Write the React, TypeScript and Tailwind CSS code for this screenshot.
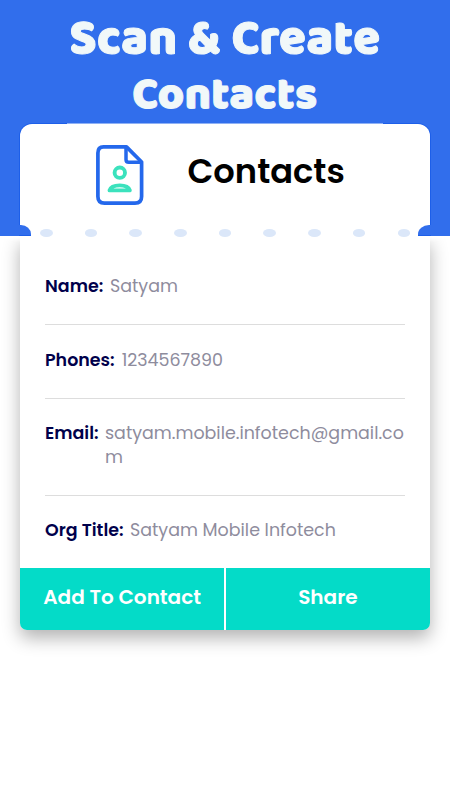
import React from "react";

const dots = [0, 1, 2, 3, 4, 5, 6, 7, 8];

function ContactFileIcon() {
  return (
    <svg width="48" height="60" viewBox="0 0 48 60" fill="none" className="block">
      <path
        d="M7.5 1.9H30.5L45.6 17V51.5Q45.6 58.1 39 58.1H8.5Q1.9 58.1 1.9 51.5V8Q1.9 1.9 7.5 1.9Z"
        stroke="#2468ec"
        strokeWidth="3.7"
        strokeLinejoin="round"
      />
      <path d="M30 2V14.5Q30 17.3 32.8 17.3H45.5" stroke="#2468ec" strokeWidth="3.5" strokeLinejoin="round" />
      <circle cx="23.8" cy="27.7" r="5.2" stroke="#3be2bd" strokeWidth="3.9" />
      <path
        d="M13.5 45.4C14.6 42 18 40.4 23.7 40.4S32.8 42 33.9 45.4Z"
        stroke="#3be2bd"
        strokeWidth="3.8"
        strokeLinejoin="round"
      />
    </svg>
  );
}

type FieldProps = { label: string; labelClass: string; children: React.ReactNode; className: string };

function Field({ label, labelClass, children, className }: FieldProps) {
  return (
    <div className={`flex items-start text-[17.45px] leading-[24.5px] ${className}`}>
      <span className={`shrink-0 whitespace-nowrap font-semibold text-[#00004b] ${labelClass}`}>{label}</span>
      {children}
    </div>
  );
}

export default function App() {
  return (
    <div className="h-[800px] w-[450px] overflow-hidden bg-white font-['Poppins','Inter',sans-serif]">
      <header className="relative z-10 flex h-[236px] flex-col bg-[#316eec] shadow-[0_3px_4px_#ffffff]">
        <h1 className="flex h-[124px] shrink-0 flex-col items-center pt-[12px] font-['Baloo_2','Inter',sans-serif] font-extrabold text-[#f1f8f9] [-webkit-text-stroke:1px_#f1f8f9]">
          <span className="h-[57px] whitespace-nowrap text-[49px] leading-[56px] tracking-[0.45px]">Scan &amp; Create</span>
          <span className="h-[56px] whitespace-nowrap text-[45px] leading-[56px] tracking-[0.4px]">Contacts</span>
        </h1>
        <section className="relative mx-5 flex h-[112px] flex-col rounded-t-[12px] bg-white shadow-[0_-1px_0_#1d5fe9,-1px_0_0_#1d5fe9,1px_0_0_#1d5fe9]">
          <span className="absolute left-[47px] right-[47px] top-[-1px] h-px bg-[#8fb1f5]" />
          <div className="flex h-[105px] items-start pl-[76px] pt-[21px]">
            <ContactFileIcon />
            <h2 className="ml-[43.5px] mt-[3px] whitespace-nowrap text-[33.7px] font-semibold leading-[48px] text-black">Contacts</h2>
          </div>
          <div className="absolute bottom-[-1px] left-[20px] right-[20px] flex justify-between">
            {dots.map((d) => (
              <span key={d} className="h-2 w-[12.5px] rounded-[50%] bg-[#dbe7f9]" />
            ))}
          </div>
          <span className="absolute bottom-0 left-[-1px] h-[11px] w-[12px] rounded-tr-[10px_9px] border-b border-[#1d5fe9] bg-[#316eec]" />
          <span className="absolute bottom-0 right-[-1px] h-[11px] w-[13px] rounded-tl-[11px_9px] border-b border-[#1d5fe9] bg-[#316eec]" />
        </section>
      </header>

      <main className="mx-5 flex h-[394px] flex-col rounded-b-[7px] bg-white shadow-[0_8px_18px_rgba(0,0,0,0.3)]">
        <div className="flex h-[332px] flex-col px-[25px]">
          <Field label="Name:" labelClass="w-[65px]" className="h-[89px] border-b-[1.5px] border-[#dddddd] pt-[38px]">
            <span className="font-normal text-[#8e8c9d]">Satyam</span>
          </Field>
          <Field label="Phones:" labelClass="w-[76.7px]" className="h-[73.5px] border-b-[1.5px] border-[#dddddd] pt-[22.6px]">
            <span className="font-normal text-[#8e8c9d]">1234567890</span>
          </Field>
          <Field label="Email:" labelClass="w-[60px]" className="h-[97.5px] border-b-[1.5px] border-[#dddddd] pt-[22px]">
            <span className="whitespace-nowrap font-normal text-[#8e8c9d]">
              satyam.mobile.infotech@gmail.co
              <br />m
            </span>
          </Field>
          <Field label="Org Title:" labelClass="w-[85px]" className="h-[72px] pt-[22px]">
            <span className="whitespace-nowrap font-normal text-[#8e8c9d]">Satyam Mobile Infotech</span>
          </Field>
        </div>
        <div className="grid h-[62px] grid-cols-2 gap-[1.5px] overflow-hidden rounded-b-[7px] text-[20px] font-semibold text-white">
          <button className="bg-[#04dbc8] pb-[4px]">Add To Contact</button>
          <button className="bg-[#04dbc8] pb-[4px]">Share</button>
        </div>
      </main>
    </div>
  );
}
